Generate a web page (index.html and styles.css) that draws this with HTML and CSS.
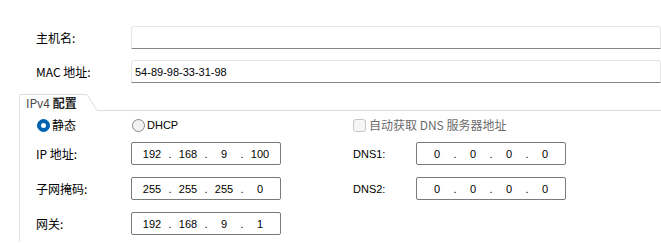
FILE: index.html
```html
<!DOCTYPE html>
<html lang="zh-CN">
  <head>
    <meta charset="UTF-8" />
    <meta name="viewport" content="width=device-width, initial-scale=1.0" />
    <title>网络配置</title>
    <link rel="stylesheet" href="styles.css">
  </head>
  <body>
    <div class="host-form">
      <div class="field">
        <label class="field-label">主机名:</label>
        <input class="text-input" type="text" value="" />
      </div>
      <div class="field">
        <label class="field-label">MAC 地址:</label>
        <input class="text-input" type="text" value="54-89-98-33-31-98" />
      </div>
    </div>

    <section class="ipv4">
      <div class="tab-head">
        <span class="tab-title">IPv4 <b>配置</b></span>
        <svg class="tab-slant" width="10" height="17" viewBox="0 0 10 17">
          <line x1="0" y1="0.5" x2="10" y2="16.5" stroke="#dcdcdc" stroke-width="1" />
        </svg>
        <span class="tab-rule"></span>
      </div>

      <div class="ipv4-body">
        <div class="row row-choice">
          <div class="col">
            <label class="radio"><span class="radio-dot is-on"></span>静态</label>
            <label class="radio"><span class="radio-dot"></span>DHCP</label>
          </div>
          <div class="col col-right">
            <label class="check"><span class="check-box"></span>自动获取 DNS 服务器地址</label>
          </div>
        </div>

        <div class="row row-first">
          <div class="col">
            <span class="field-label">IP 地址:</span>
            <div class="ip-box"><span>192</span><i>.</i><span>168</span><i>.</i><span>9</span><i>.</i><span>100</span></div>
          </div>
          <div class="col col-right">
            <span class="dns-label">DNS1:</span>
            <div class="ip-box"><span>0</span><i>.</i><span>0</span><i>.</i><span>0</span><i>.</i><span>0</span></div>
          </div>
        </div>

        <div class="row">
          <div class="col">
            <span class="field-label">子网掩码:</span>
            <div class="ip-box"><span>255</span><i>.</i><span>255</span><i>.</i><span>255</span><i>.</i><span>0</span></div>
          </div>
          <div class="col col-right">
            <span class="dns-label">DNS2:</span>
            <div class="ip-box"><span>0</span><i>.</i><span>0</span><i>.</i><span>0</span><i>.</i><span>0</span></div>
          </div>
        </div>

        <div class="row">
          <div class="col">
            <span class="field-label">网关:</span>
            <div class="ip-box"><span>192</span><i>.</i><span>168</span><i>.</i><span>9</span><i>.</i><span>1</span></div>
          </div>
        </div>
      </div>
    </section>
  </body>
</html>
```

FILE: styles.css
```css
* {
  margin: 0;
  padding: 0;
  box-sizing: border-box;
}

body {
  width: 661px;
  height: 243px;
  overflow: hidden;
  background: #fff;
  color: #000;
  font-family: "Noto Sans CJK SC", "Liberation Sans", sans-serif;
  font-size: 12px;
}

.host-form {
  padding: 26px 0 0 36px;
}

.field {
  display: flex;
  align-items: center;
  height: 23px;
  margin-bottom: 11px;
}

.field-label {
  width: 95px;
  flex-shrink: 0;
  line-height: 23px;
}

.text-input {
  flex: 1;
  height: 23px;
  padding: 0 3px;
  border: 1px solid #e6e6e6;
  border-bottom-color: #878787;
  border-radius: 3px 3px 0 0;
  background: #fff;
  font-family: "Liberation Sans", "Noto Sans CJK SC", sans-serif;
  font-size: 11px;
  color: #000;
  outline: none;
}

.ipv4 {
  margin: 1px 0 0 19px;
  border-left: 1px solid #e3e3e3;
  height: 148px;
}

.tab-head {
  display: flex;
  height: 17px;
}

.tab-title {
  width: 67px;
  height: 17px;
  padding-left: 6px;
  border-top: 1px solid #dcdcdc;
  color: #4a4a4a;
  line-height: 15px;
}

.tab-title b {
  color: #222;
}

.tab-slant {
  display: block;
  flex-shrink: 0;
}

.tab-rule {
  flex: 1;
  border-bottom: 1px solid #dcdcdc;
}

.ipv4-body {
  padding-left: 16px;
}

.row {
  display: flex;
  align-items: center;
  height: 23px;
  margin-top: 12px;
}

.row-choice {
  height: 16px;
  margin-top: 6px;
}

.row-first {
  margin-top: 9px;
}

.col {
  display: flex;
  align-items: center;
  width: 245px;
}

.col-right {
  margin-left: 72px;
}

.radio {
  display: flex;
  align-items: center;
  width: 95px;
  line-height: 16px;
}

.radio:last-child {
  font-family: "Liberation Sans", "Noto Sans CJK SC", sans-serif;
  font-size: 11px;
}

.radio-dot {
  position: relative;
  width: 13px;
  height: 13px;
  margin: 0 2px 0 1px;
  border: 1px solid #8a8a8a;
  border-radius: 50%;
  background: #f2f2f2;
}

.radio-dot.is-on {
  border-color: #0063b1;
  background: #0063b1;
}

.radio-dot.is-on::after {
  content: "";
  position: absolute;
  left: 3px;
  top: 3px;
  width: 5px;
  height: 5px;
  border-radius: 50%;
  background: #fff;
}

.check {
  display: flex;
  align-items: center;
  color: #6b6b6b;
  white-space: nowrap;
  line-height: 16px;
}

.check-box {
  width: 13px;
  height: 13px;
  margin-right: 3px;
  border: 1px solid #c6c6c6;
  border-radius: 3px;
  background: #f6f6f6;
}

.dns-label {
  width: 63px;
  flex-shrink: 0;
  font-family: "Liberation Sans", "Noto Sans CJK SC", sans-serif;
  font-size: 11px;
}

.ip-box {
  display: flex;
  align-items: center;
  width: 150px;
  height: 23px;
  padding-left: 5px;
  border: 1px solid #7a7a7a;
  border-radius: 2px;
  font-family: "Liberation Sans", sans-serif;
  font-size: 11px;
}

.ip-box span {
  width: 30px;
  text-align: center;
}

.ip-box i {
  width: 6px;
  font-style: normal;
  text-align: center;
}
```
